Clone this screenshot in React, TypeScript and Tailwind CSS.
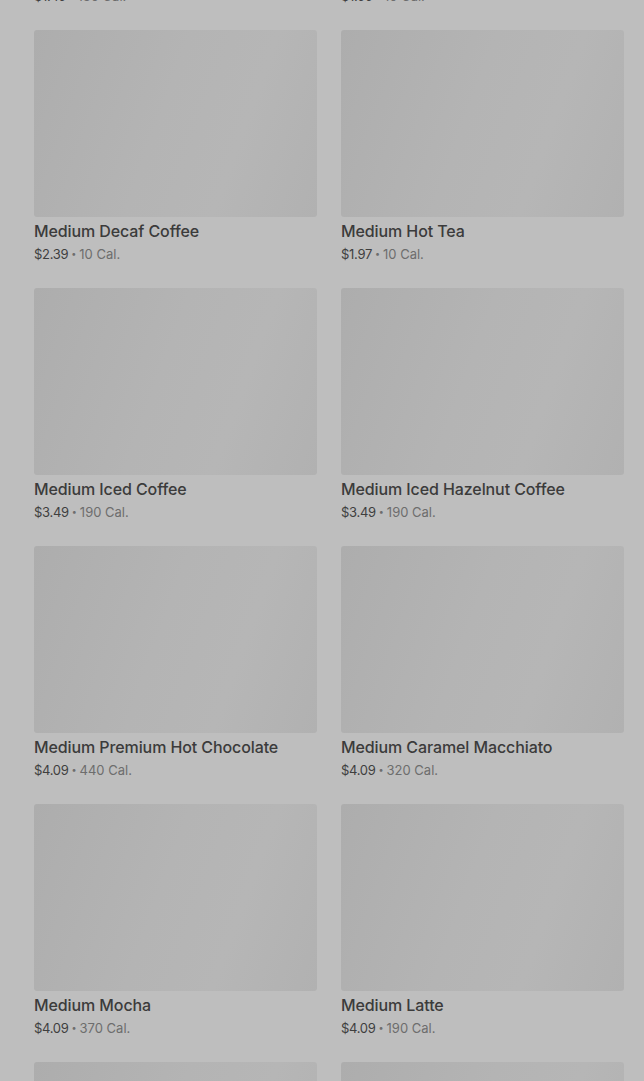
const items = [
  { name: 'Medium Iced Tea', price: '$1.49', cal: '130 Cal.' },
  { name: 'Medium Coffee', price: '$1.99', cal: '10 Cal.' },
  { name: 'Medium Decaf Coffee', price: '$2.39', cal: '10 Cal.' },
  { name: 'Medium Hot Tea', price: '$1.97', cal: '10 Cal.' },
  { name: 'Medium Iced Coffee', price: '$3.49', cal: '190 Cal.' },
  { name: 'Medium Iced Hazelnut Coffee', price: '$3.49', cal: '190 Cal.' },
  { name: 'Medium Premium Hot Chocolate', price: '$4.09', cal: '440 Cal.' },
  { name: 'Medium Caramel Macchiato', price: '$4.09', cal: '320 Cal.' },
  { name: 'Medium Mocha', price: '$4.09', cal: '370 Cal.' },
  { name: 'Medium Latte', price: '$4.09', cal: '190 Cal.' },
  { name: 'Medium Cappuccino', price: '$4.09', cal: '130 Cal.' },
  { name: 'Medium Americano', price: '$3.19', cal: '10 Cal.' },
];

const MenuCard = ({ name, price, cal }: { name: string; price: string; cal: string }) => (
  <div className="flex flex-col">
    <div className="h-[187px] rounded-[3px] bg-[linear-gradient(110deg,#adadad_0%,#b4b4b4_45%,#b6b6b6_70%,#b1b1b1_100%)]" />
    <div className="mt-[3px] text-[16px] leading-[16px] font-medium text-[#3b3b3b] py-[3px] tracking-[-0.1px]">{name}</div>
    <div className="mt-[4px] text-[13px] leading-[16px] flex items-center">
      <span className="text-[#3f3f3f] tracking-[-0.3px]">{price}</span>
      <span className="mx-[3px] text-[9px] text-[#6d6d6d]">•</span>
      <span className="text-[#6d6d6d]">{cal}</span>
    </div>
  </div>
);

export default function App() {
  return (
    <div className="w-[644px] h-[1081px] overflow-hidden bg-[#bebebe] font-['Inter',sans-serif]">
      <div className="-mt-[228px] pl-[34px] pr-[20px] grid grid-cols-2 gap-x-[24px] gap-y-[26px]">
        {items.map((it) => (
          <MenuCard key={it.name} {...it} />
        ))}
      </div>
    </div>
  );
}
